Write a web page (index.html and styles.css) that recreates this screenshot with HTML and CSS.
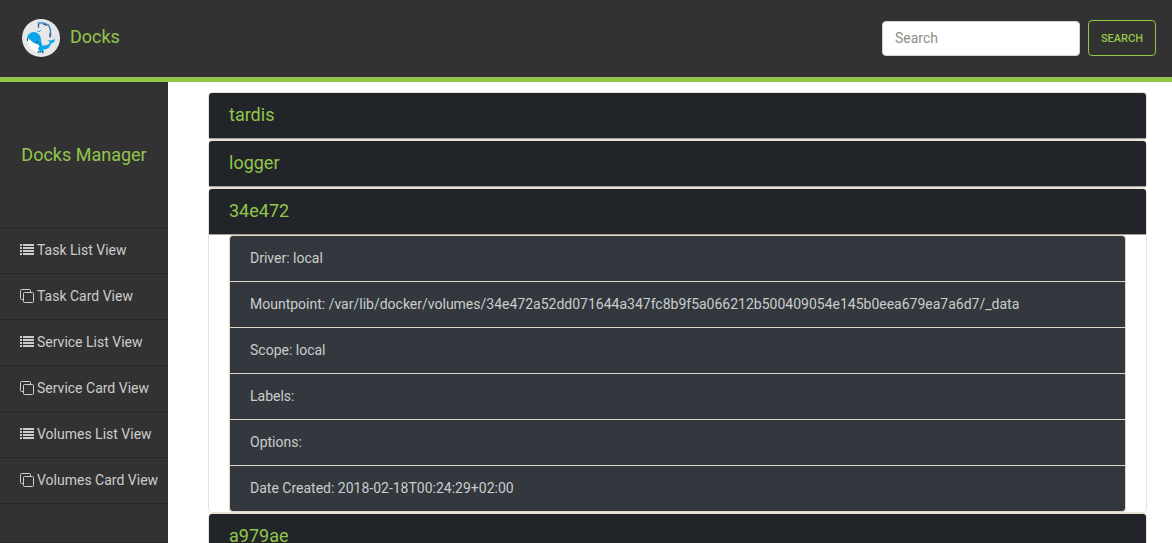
FILE: index.html
```html
<!DOCTYPE html>
<html lang="en">
<head>
<meta charset="utf-8">
<title>Docks</title>
<link rel="stylesheet" href="styles.css">
</head>
<body>
<svg class="sprite" aria-hidden="true">
  <symbol id="list" viewBox="0 0 14 14">
    <path d="M0 1h2v2H0zM0 4h2v2H0zM0 7h2v2H0zM0 10h2v2H0zM3 1h11v2H3zM3 4h11v2H3zM3 7h11v2H3zM3 10h11v2H3z" fill="currentColor"/>
  </symbol>
  <symbol id="cards" viewBox="0 0 14 14">
    <path d="M3 10.5H1.5a1 1 0 0 1-1-1v-8a1 1 0 0 1 1-1h8a1 1 0 0 1 1 1V3" fill="none" stroke="currentColor"/>
    <rect x="3.5" y="3.5" width="10" height="10" rx="1" fill="none" stroke="currentColor"/>
  </symbol>
</svg>
<header class="navbar">
  <a class="brand" href="#">
    <svg class="logo" viewBox="0 0 38 38" aria-hidden="true">
      <circle cx="19" cy="19" r="19" fill="#e6e7e9"/>
      <path d="M16.500 9V4h5l5 2 2 5v7" fill="none" stroke="#4a86c4" stroke-width="1.500"/>
      <path d="M16.500 7V5M21 5l4 1.500M28 14v4.500" fill="none" stroke="#2c4a6b" stroke-width="1"/>
      <path d="M15 11l2 2 2-2" fill="none" stroke="#5b9fd8" stroke-width="1"/>
      <path d="M5 18c1-3 4-5 7-5 4 0 7 4 7 8l1 6c-3 1-12-2-15-9z" fill="#0aa5ea"/>
      <path d="M5 18l3 3 4 3 5 2 2 7c-8 1-14-6-14-15z" fill="#fff"/>
      <path d="M17 24c2 2 3 3 5 2.500 3 0 5-1 6-3l-2-2.500 3 .500 4-1.500c0 3-2 4-4 4.500-1 4-4 6-8 6l1 4-2-2-2 2-1-3-1-2 2-3z" fill="#0aa5ea"/>
      <path d="M5.500 19v3M14 23h2M18 25v1M20 32l1 2M16 32l1 2" fill="none" stroke="#223646" stroke-width="1"/>
    </svg>
    <span>Docks</span>
  </a>
  <form class="search">
    <input class="search-box" type="text" placeholder="Search" aria-label="Search">
    <button class="search-button" type="button">SEARCH</button>
  </form>
</header>
<div class="layout">
  <aside class="sidebar">
    <h1 class="sidebar-title">Docks Manager</h1>
    <nav class="menu">
      <a href="#"><svg class="icon"><use href="#list"/></svg>Task List View</a>
      <a href="#"><svg class="icon"><use href="#cards"/></svg>Task Card View</a>
      <a href="#"><svg class="icon"><use href="#list"/></svg>Service List View</a>
      <a href="#"><svg class="icon"><use href="#cards"/></svg>Service Card View</a>
      <a href="#"><svg class="icon"><use href="#list"/></svg>Volumes List View</a>
      <a href="#"><svg class="icon"><use href="#cards"/></svg>Volumes Card View</a>
    </nav>
  </aside>
  <main class="content">
    <section class="card"><h2 class="card-header"><a href="#">tardis</a></h2></section>
    <section class="card"><h2 class="card-header"><a href="#">logger</a></h2></section>
    <section class="card">
      <h2 class="card-header"><a href="#">34e472</a></h2>
      <ul class="details">
        <li>Driver: local</li>
        <li>Mountpoint: /var/lib/docker/volumes/34e472a52dd071644a347fc8b9f5a066212b500409054e145b0eea679ea7a6d7/_data</li>
        <li>Scope: local</li>
        <li>Labels:</li>
        <li>Options:</li>
        <li>Date Created: 2018-02-18T00:24:29+02:00</li>
      </ul>
    </section>
    <section class="card"><h2 class="card-header"><a href="#">a979ae</a></h2></section>
  </main>
</div>
</body>
</html>
```
FILE: styles.css
```css
* { box-sizing: border-box; }

body {
  display: flex;
  flex-direction: column;
  height: 100vh;
  margin: 0;
  overflow: hidden;
  background: #fff;
  font-family: Roboto, "Liberation Sans", sans-serif;
  font-size: 14px;
  line-height: 21px;
}

a { color: inherit; text-decoration: none; }

.sprite { display: none; }

.navbar {
  display: flex;
  flex: none;
  align-items: center;
  justify-content: space-between;
  padding: 19px 16px 20px 22px;
  border-bottom: 5px solid #93c54b;
  background: #323232;
}

.brand {
  display: flex;
  align-items: center;
  gap: 10px;
  color: #93c54b;
  font-size: 18px;
}

.brand span { padding-bottom: 4px; }

.logo { width: 38px; height: 38px; }

.search {
  display: flex;
  align-items: center;
  gap: 8px;
}

.search-box {
  width: 198px;
  height: 35px;
  padding: 6px 12px;
  border: 1px solid #ced4da;
  border-radius: 4px;
  background: #fff;
  color: #495057;
  font: inherit;
}

.search-box::placeholder { color: #8e8c84; opacity: 1; }

.search-button {
  height: 36px;
  padding: 0 12px;
  border: 1px solid #93c54b;
  border-radius: 4px;
  background: transparent;
  color: #93c54b;
  font: 500 11px Roboto, sans-serif;
}

.layout {
  display: flex;
  flex: 1;
  min-height: 0;
}

.sidebar {
  flex: none;
  width: 168px;
  border-bottom: 1px solid #282828;
  background: #323232;
}

.sidebar-title {
  margin: 0;
  padding: 60px 0;
  color: #93c54b;
  font-size: 18px;
  font-weight: 400;
  line-height: 25px;
  text-align: center;
}

.menu { border-top: 1px solid #282828; }

.menu a {
  display: flex;
  align-items: center;
  gap: 3px;
  height: 46px;
  padding-left: 20px;
  border-bottom: 1px solid #282828;
  color: #ccc;
  white-space: nowrap;
}

.icon {
  flex: none;
  width: 14px;
  height: 14px;
  margin-bottom: 1px;
}

.content {
  flex: 1;
  min-width: 0;
  padding: 10px 25px 0 40px;
}

.card {
  border: 1px solid #eae1d6;
  border-radius: 4px;
}

.card-header {
  margin: 0;
  padding: 12px 20px 13px;
  border-bottom: 1px solid #aaa398;
  border-radius: 3px 3px 0 0;
  background: #212529;
  color: #93c54b;
  font-size: 18px;
  font-weight: 400;
  line-height: 20px;
}

.details {
  margin: 0 20px;
  padding: 0;
  overflow: hidden;
  border: 1px solid #dfd7ca;
  border-radius: 4px;
  background: #32383e;
  color: #ccc;
  list-style: none;
}

.details li { padding: 12px 20px; }

.details li + li { border-top: 1px solid #dfd7ca; }
```
